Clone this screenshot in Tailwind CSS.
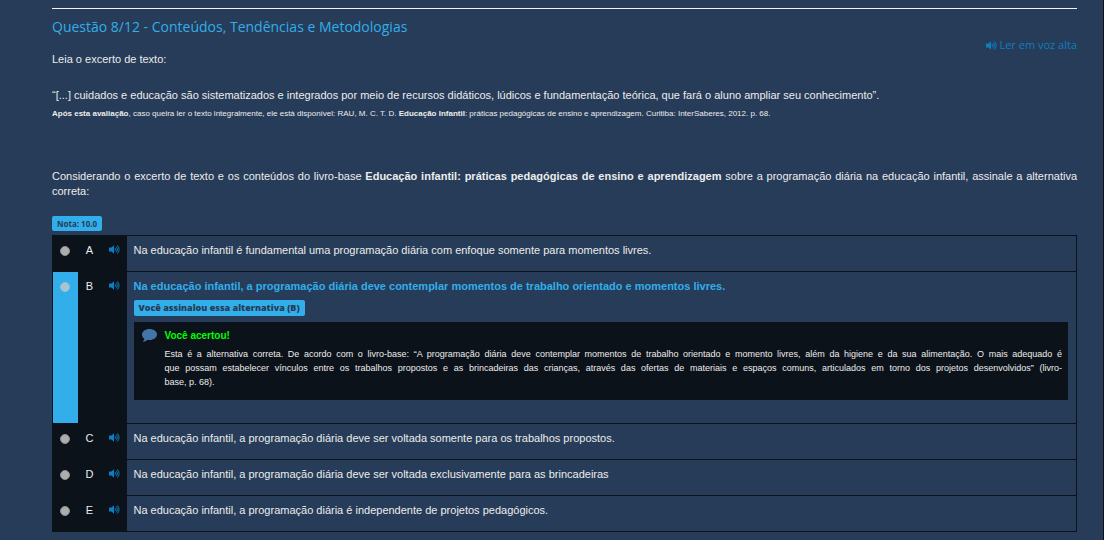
<!DOCTYPE html>
<html lang="pt-BR">

<head>
    <meta charset="UTF-8">
    <meta name="viewport" content="width=device-width, initial-scale=1.0">
    <title>Questão 8/12 - Conteúdos, Tendências e Metodologias</title>
    <script src="https://cdn.jsdelivr.net/npm/@tailwindcss/browser@4"></script>
</head>

<body class="bg-[#263c58] text-[#ececec] font-['Liberation_Sans',Arial,sans-serif] text-[11px] leading-[15px]">

    <!-- Shared icons -->
    <svg class="hidden">
        <symbol id="icon-volume" viewBox="0 0 22 18">
            <path fill="currentColor" d="M10 .5v17L5 13H1a1 1 0 0 1-1-1V6a1 1 0 0 1 1-1h4z" />
            <path fill="none" stroke="currentColor" stroke-width="2" stroke-linecap="round"
                d="M12.500 6.500a3.500 3.500 0 0 1 0 5M14.800 3.800a7 7 0 0 1 0 10.400M17 1.200a10.500 10.500 0 0 1 0 15.600" />
        </symbol>
        <symbol id="icon-comment" viewBox="0 0 30 26">
            <path fill="currentColor"
                d="M15 0C23.300 0 30 4.900 30 11s-6.700 11-15 11c-1.300 0-2.600-.1-3.800-.4C8.600 24 5.600 25.300 2.400 25.800c-.6 0-.8-.6-.4-1 1.500-1.400 2.500-3 2.900-5C1.900 17.800 0 14.600 0 11 0 4.900 6.700 0 15 0z" />
        </symbol>
    </svg>

    <main class="min-h-screen border-r border-[#0c121a] pl-[52px] pr-[26px] pt-2 pb-2">

        <!-- Header -->
        <header class="border-t border-[#f2f2f2] pt-2">
            <h1 class="font-['Open_Sans',sans-serif] text-[14px] leading-5 text-[#32aeea]">Questão 8/12 - Conteúdos, Tendências e Metodologias</h1>
            <div class="flex justify-end">
                <a href="#" class="flex items-center gap-[2px] font-['Open_Sans',sans-serif] text-[11px] leading-4 text-[#0d7fc0]">
                    <svg class="w-[11px] h-[9px]" aria-hidden="true"><use href="#icon-volume" /></svg>
                    Ler em voz alta
                </a>
            </div>
        </header>

        <!-- Question text -->
        <section class="text-justify">
            <p class="-mt-[1px]">Leia o excerto de texto:</p>
            <p class="mt-[21px]">“[...] cuidados e educação são sistematizados e integrados por meio de recursos didáticos, lúdicos e fundamentação teórica, que fará o aluno ampliar seu conhecimento”.</p>
            <p class="mt-[3px] text-[8px]"><strong>Após esta avaliação</strong>, caso queira ler o texto integralmente, ele está disponível: RAU, M. C. T. D. <strong>Educação Infantil</strong>: práticas pedagógicas de ensino e aprendizagem. Curitiba: InterSaberes, 2012. p. 68.</p>
            <p class="mt-12">Considerando o excerto de texto e os conteúdos do livro-base <strong>Educação infantil: práticas pedagógicas de ensino e aprendizagem</strong> sobre a programação diária na educação infantil, assinale a alternativa correta:</p>
        </section>

        <div class="mt-[17px] flex">
            <span class="rounded-[2px] bg-[#32aeea] px-[5px] font-['Open_Sans',sans-serif] text-[8px] leading-[15px] font-bold text-[#263c58]">Nota: 10.0</span>
        </div>

        <!-- Alternatives -->
        <table class="mt-1 w-full border-collapse border border-[#0c121a]">
            <tbody class="[&_td]:align-top">
                <tr class="h-9 border-b border-[#0c121a]">
                    <td class="w-[25px] bg-[#0c121a] pt-[10px]"><input type="radio" name="alternativa" id="alt-a" class="mx-auto block size-[10px] appearance-none rounded-full border border-[#8f8f8f] bg-[#adadad]"></td>
                    <td class="w-6 bg-[#0c121a] pt-[7px] text-center"><label for="alt-a">A</label></td>
                    <td class="w-[25px] bg-[#0c121a] pt-[9px]"><button type="button" aria-label="Ler alternativa A" class="mx-auto block text-[#0d7fc0]"><svg class="w-[11px] h-[9px]"><use href="#icon-volume" /></svg></button></td>
                    <td class="px-[7px] pt-[7px]">Na educação infantil é fundamental uma programação diária com enfoque somente para momentos livres.</td>
                </tr>
                <tr class="border-b border-[#0c121a]">
                    <td class="bg-[#32aeea] pt-[10px]"><input type="radio" name="alternativa" id="alt-b" checked class="mx-auto block size-[10px] appearance-none rounded-full border border-[#8fc4dd] bg-[#a9c3cf]"></td>
                    <td class="bg-[#0c121a] pt-[7px] text-center"><label for="alt-b">B</label></td>
                    <td class="bg-[#0c121a] pt-[9px]"><button type="button" aria-label="Ler alternativa B" class="mx-auto block text-[#0d7fc0]"><svg class="w-[11px] h-[9px]"><use href="#icon-volume" /></svg></button></td>
                    <td class="pl-[7px] pr-2 pt-[7px] pb-[23px]">
                        <p class="font-bold text-[#32aeea]">Na educação infantil, a programação diária deve contemplar momentos de trabalho orientado e momentos livres.</p>
                        <div class="mt-[6px] flex">
                            <span class="rounded-[2px] bg-[#32aeea] px-[5px] font-['Open_Sans',sans-serif] text-[9px] leading-4 font-extrabold text-[#263c58]">Você assinalou essa alternativa (B)</span>
                        </div>
                        <div class="mt-[6px] flex gap-2 bg-[#0c121a] pl-2 pr-[6px] pt-[7px] pb-[11px]">
                            <svg class="w-[15px] h-[13px] shrink-0 text-[#4375a8]" aria-hidden="true"><use href="#icon-comment" /></svg>
                            <div class="grow leading-[14px]">
                                <p class="text-[10px] font-bold text-[#00ff00]">Você acertou!</p>
                                <p class="mt-1 text-[9px]">
                                    <span class="block [text-align-last:justify]">Esta é a alternativa correta. De acordo com o livro-base: “A programação diária deve contemplar momentos de trabalho orientado e momento livres, além da higiene e da sua alimentação. O mais adequado é</span>
                                    <span class="block [text-align-last:justify]">que possam estabelecer vínculos entre os trabalhos propostos e as brincadeiras das crianças, através das ofertas de materiais e espaços comuns, articulados em torno dos projetos desenvolvidos” (livro-</span>
                                    <span class="block">base, p. 68).</span>
                                </p>
                            </div>
                        </div>
                    </td>
                </tr>
                <tr class="h-9 border-b border-[#0c121a]">
                    <td class="bg-[#0c121a] pt-[10px]"><input type="radio" name="alternativa" id="alt-c" class="mx-auto block size-[10px] appearance-none rounded-full border border-[#8f8f8f] bg-[#adadad]"></td>
                    <td class="bg-[#0c121a] pt-[7px] text-center"><label for="alt-c">C</label></td>
                    <td class="bg-[#0c121a] pt-[9px]"><button type="button" aria-label="Ler alternativa C" class="mx-auto block text-[#0d7fc0]"><svg class="w-[11px] h-[9px]"><use href="#icon-volume" /></svg></button></td>
                    <td class="px-[7px] pt-[7px]">Na educação infantil, a programação diária deve ser voltada somente para os trabalhos propostos.</td>
                </tr>
                <tr class="h-9 border-b border-[#0c121a]">
                    <td class="bg-[#0c121a] pt-[10px]"><input type="radio" name="alternativa" id="alt-d" class="mx-auto block size-[10px] appearance-none rounded-full border border-[#8f8f8f] bg-[#adadad]"></td>
                    <td class="bg-[#0c121a] pt-[7px] text-center"><label for="alt-d">D</label></td>
                    <td class="bg-[#0c121a] pt-[9px]"><button type="button" aria-label="Ler alternativa D" class="mx-auto block text-[#0d7fc0]"><svg class="w-[11px] h-[9px]"><use href="#icon-volume" /></svg></button></td>
                    <td class="px-[7px] pt-[7px]">Na educação infantil, a programação diária deve ser voltada exclusivamente para as brincadeiras</td>
                </tr>
                <tr class="h-9">
                    <td class="bg-[#0c121a] pt-[10px]"><input type="radio" name="alternativa" id="alt-e" class="mx-auto block size-[10px] appearance-none rounded-full border border-[#8f8f8f] bg-[#adadad]"></td>
                    <td class="bg-[#0c121a] pt-[7px] text-center"><label for="alt-e">E</label></td>
                    <td class="bg-[#0c121a] pt-[9px]"><button type="button" aria-label="Ler alternativa E" class="mx-auto block text-[#0d7fc0]"><svg class="w-[11px] h-[9px]"><use href="#icon-volume" /></svg></button></td>
                    <td class="px-[7px] pt-[7px]">Na educação infantil, a programação diária é independente de projetos pedagógicos.</td>
                </tr>
            </tbody>
        </table>
    </main>

</body>

</html>
